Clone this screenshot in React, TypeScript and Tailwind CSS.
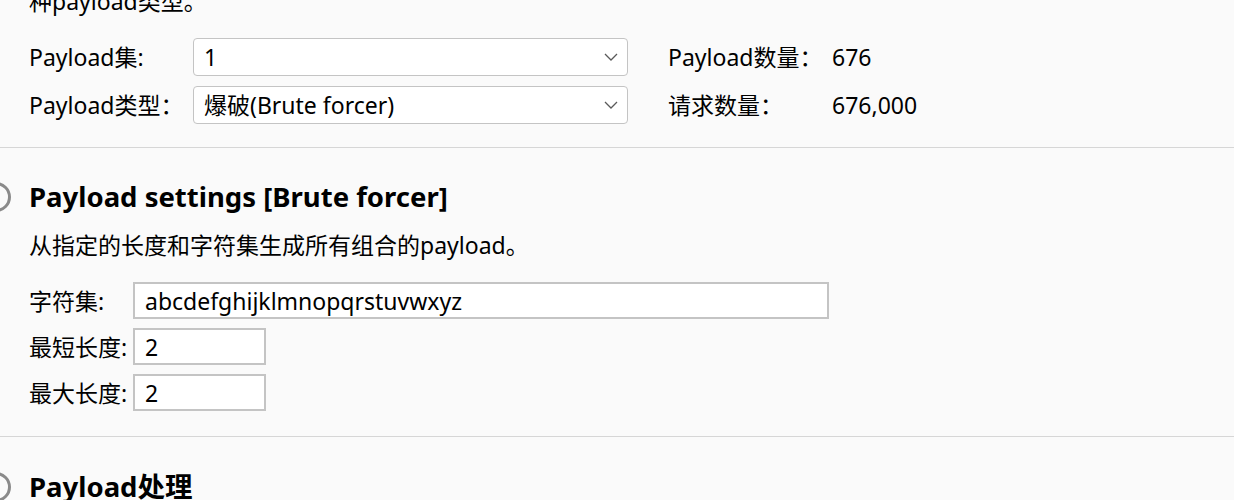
import React from "react";

const font = {
  fontFamily: '"Noto Sans", "Noto Sans CJK SC", sans-serif',
};

const Chevron = () => (
  <svg width="14" height="8" viewBox="0 0 14 8" fill="none">
    <path d="M1 1l6 6 6-6" stroke="#5a5a5a" strokeWidth="1.3" />
  </svg>
);

const Select = ({ value }: { value: string }) => (
  <div className="w-[435px] h-[38px] bg-white border border-[#c4c4c4] rounded-[4px] flex items-center justify-between pl-[10px] pr-[9px]">
    <span>{value}</span>
    <Chevron />
  </div>
);

const Field = ({ value, w }: { value: string; w: string }) => (
  <div className={`${w} h-[37px] bg-white border-2 border-[#c4c4c4] flex items-center pl-[10px]`}>
    {value}
  </div>
);

const Heading = ({ children }: { children: React.ReactNode }) => (
  <div className="flex items-center h-[36px] ml-[-48px]">
    <div className="w-[30px] h-[30px] shrink-0 rounded-full border-[3px] border-[#8a8a8a] mr-[18px]" />
    <h2 className="text-[27.5px] font-bold leading-[36px]">{children}</h2>
  </div>
);

export default function App() {
  return (
    <div
      style={font}
      className="w-[1234px] h-[500px] overflow-hidden bg-[#fafafa] text-black text-[23px] leading-[30px]"
    >
      <div className="pl-[29px] mt-[-14px]">
        <p>种payload类型。</p>
        <div className="mt-[22px] flex flex-col gap-[10px]">
          <div className="flex items-center">
            <span className="w-[164px]">Payload集:</span>
            <Select value="1" />
            <span className="w-[164px] ml-[40px]">Payload数量：</span>
            <span>676</span>
          </div>
          <div className="flex items-center">
            <span className="w-[164px]">Payload类型：</span>
            <Select value="爆破(Brute forcer)" />
            <span className="w-[164px] ml-[40px]">请求数量：</span>
            <span>676,000</span>
          </div>
        </div>
      </div>

      <div className="mt-[23px] h-px bg-[#d6d6d6]" />

      <div className="pl-[29px] pt-[31px]">
        <Heading>Payload settings [Brute forcer]</Heading>
        <p className="mt-[15px]">从指定的长度和字符集生成所有组合的payload。</p>
        <div className="mt-[22px] flex flex-col gap-[9px]">
          <div className="flex items-center">
            <span className="w-[104px]">字符集:</span>
            <Field value="abcdefghijklmnopqrstuvwxyz" w="w-[696px]" />
          </div>
          <div className="flex items-center">
            <span className="w-[104px]">最短长度:</span>
            <Field value="2" w="w-[133px]" />
          </div>
          <div className="flex items-center">
            <span className="w-[104px]">最大长度:</span>
            <Field value="2" w="w-[133px]" />
          </div>
        </div>
      </div>

      <div className="mt-[25px] h-px bg-[#d6d6d6]" />

      <div className="pl-[29px] pt-[32px]">
        <Heading>Payload处理</Heading>
      </div>
    </div>
  );
}
